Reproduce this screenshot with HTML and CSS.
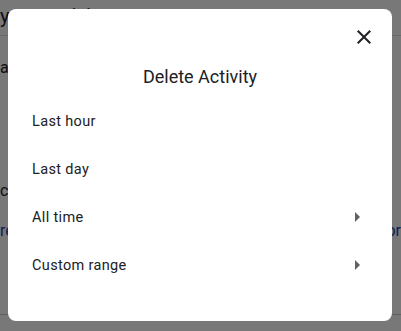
FILE: index.html
```html
<!DOCTYPE html>
<html lang="en">
<head>
  <meta charset="UTF-8">
  <meta name="viewport" content="width=device-width, initial-scale=1.0">
  <title>Delete Activity</title>
  <link rel="stylesheet" href="styles.css">
</head>
<body>
  <div class="page">
    <h1 class="page-title">your activity</h1>
    <p class="page-line">at</p>
    <p class="page-line low">c</p>
    <div class="page-links">
      <a href="javascript:;">re</a>
      <a href="javascript:;">or</a>
    </div>
    <div class="page-rule"></div>
  </div>

  <div class="scrim"></div>

  <div class="dialog">
    <div class="dialog-top">
      <button class="close" aria-label="Close">
        <svg width="24" height="24" viewBox="0 0 24 24">
          <path d="M19 6.41 17.59 5 12 10.59 6.41 5 5 6.41 10.59 12 5 17.59 6.41 19 12 13.41 17.59 19 19 17.59 13.41 12z" fill="#202124"/>
        </svg>
      </button>
    </div>
    <h2 class="dialog-title">Delete Activity</h2>
    <ul class="options">
      <li>Last hour</li>
      <li>Last day</li>
      <li>All time <span class="arrow"></span></li>
      <li>Custom range <span class="arrow"></span></li>
    </ul>
  </div>
</body>
</html>
```

FILE: styles.css
```css
* {
  margin: 0;
  padding: 0;
  box-sizing: border-box;
}
body {
  width: 401px;
  height: 331px;
  overflow: hidden;
  background-color: #fff;
  font-family: Roboto, "Liberation Sans", sans-serif;
  color: #202124;
}
.page-title {
  font-size: 20px;
  font-weight: 400;
  line-height: 22px;
  height: 36px;
  padding-top: 5px;
  border-bottom: 1px solid #ddd;
}
.page-line {
  font-size: 16px;
  line-height: 20px;
  margin-top: 22px;
}
.page-line.low {
  margin-top: 103px;
}
.page-links {
  display: flex;
  justify-content: space-between;
  margin-top: 20px;
  font-size: 16px;
}
.page-links a {
  color: #1a3fb8;
  text-decoration: none;
}
.page-rule {
  margin-top: 74px;
  border-top: 1px solid #ccc;
}
.scrim {
  position: fixed;
  inset: 0;
  background-color: rgba(0, 0, 0, 0.53);
}
.dialog {
  position: absolute;
  left: 8px;
  top: 9px;
  width: 384px;
  height: 312px;
  background-color: #fff;
  border-radius: 8px;
  padding: 8px 0 0;
}
.dialog-top {
  display: flex;
  justify-content: flex-end;
  padding-right: 8px;
  height: 40px;
}
.close {
  width: 40px;
  height: 40px;
  border: none;
  background: none;
  display: flex;
  align-items: center;
  justify-content: center;
}
.dialog-title {
  font-size: 18px;
  font-weight: 400;
  line-height: 24px;
  text-align: center;
  margin-top: 8px;
  margin-bottom: 8px;
  color: #202124;
}
.options {
  list-style: none;
}
.options li {
  height: 48px;
  display: flex;
  align-items: center;
  justify-content: space-between;
  padding: 0 32px 0 24px;
  font-size: 14.5px;
  letter-spacing: 0.35px;
}
.arrow {
  width: 0;
  height: 0;
  border-top: 5px solid transparent;
  border-bottom: 5px solid transparent;
  border-left: 5px solid #5f6368;
}
```
